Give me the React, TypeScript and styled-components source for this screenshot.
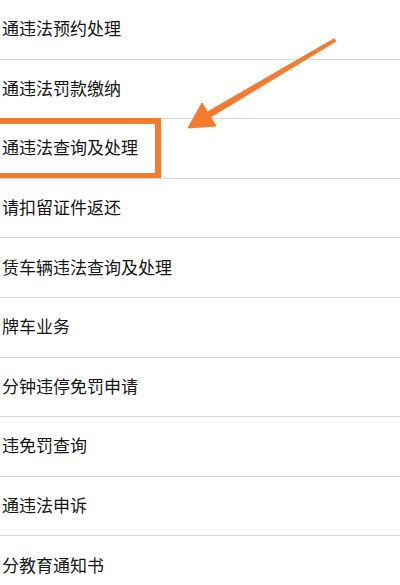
import styled, { createGlobalStyle } from 'styled-components';

const GlobalStyle = createGlobalStyle`
    html, body {
        margin: 0;
        padding: 0;
        background: #ffffff;
        overflow: hidden;
    }
`;

const Page = styled.div`
    position: relative;
    width: 400px;
    height: 585px;
    overflow: hidden;
    background: #ffffff;
    font-family: "Noto Sans CJK SC", "Noto Sans", sans-serif;
`;

const List = styled.ul`
    list-style: none;
    margin: -1px 0 0 0;
    padding: 0;
`;

const Row = styled.li<{ $marked?: boolean }>`
    position: relative;
    box-sizing: border-box;
    height: 59.6px;
    display: flex;
    align-items: center;
    padding: 0 0 3px 2px;
    border-top: 1px solid #d9d9d9;
    font-size: 17px;
    color: #141414;
    white-space: nowrap;

    ${({ $marked }) => $marked && `
        &::after {
            content: "";
            position: absolute;
            left: -12px;
            top: -1px;
            width: 173px;
            height: 61px;
            box-sizing: border-box;
            border: 6px solid #f27b2d;
        }
    `}
`;

const Arrow = styled.svg`
    position: absolute;
    left: 0;
    top: 0;
    pointer-events: none;
`;

const items = [
    '通违法预约处理',
    '通违法罚款缴纳',
    '通违法查询及处理',
    '请扣留证件返还',
    '赁车辆违法查询及处理',
    '牌车业务',
    '分钟违停免罚申请',
    '违免罚查询',
    '通违法申诉',
    '分教育通知书',
];

export default function App() {
  return (
      <Page>
        <GlobalStyle />
        <List>
            {items.map((label, index) => (
                <Row key={index} $marked={index === 2}>
                    {label}
                </Row>
            ))}
        </List>
        <Arrow width="400" height="585" viewBox="0 0 400 585">
            <polygon
                points="188,128 202,103 207.5,111.9 334.2,38.7 335.8,41.3 210.5,117.1 216,126"
                fill="#f27b2d"
                stroke="#f27b2d"
                strokeWidth="1"
                strokeLinejoin="round"
            />
        </Arrow>
      </Page>
  )
}
